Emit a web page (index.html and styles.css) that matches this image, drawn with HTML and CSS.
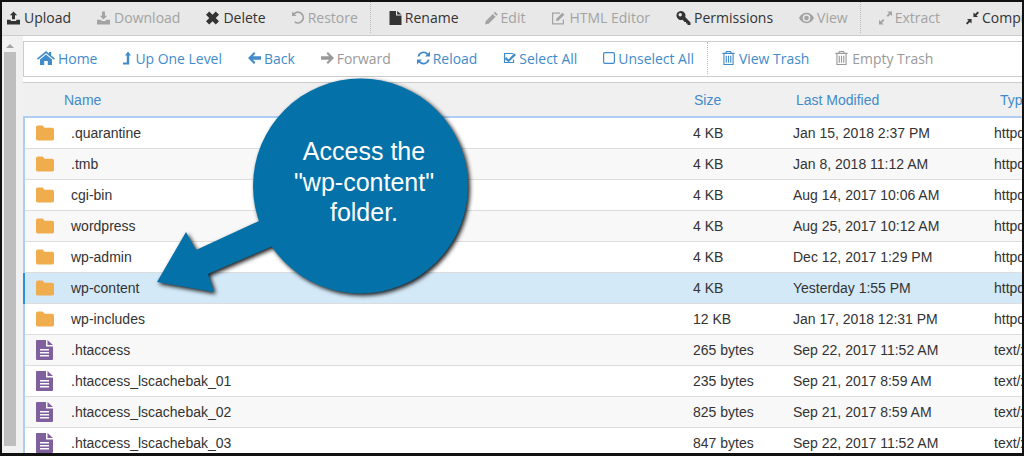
FILE: index.html
```html
<!DOCTYPE html>
<html lang="en">
<head>
<meta charset="utf-8">
<title>File Manager</title>
<link rel="stylesheet" href="styles.css">
</head>
<body>
<svg class="sprite" width="0" height="0" aria-hidden="true">
  <symbol id="i-upload" viewBox="0 0 14 14"><path d="M7 0l4 4H8.600v4.400H5.400V4H3z"/><path d="M0 9h4v1.200h6V9h4v5H0z"/></symbol>
  <symbol id="i-download" viewBox="0 0 14 14"><path d="M5.400 0h3.200v4.500H11L7 8.600 3 4.500h2.400z"/><path d="M0 9h4l1.200 1.200h3.600L10 9h4v5H0z"/></symbol>
  <symbol id="i-x" viewBox="0 0 12 12"><path d="M3 0l3 3 3-3 3 3-3 3 3 3-3 3-3-3-3 3-3-3 3-3-3-3z"/></symbol>
  <symbol id="i-restore" viewBox="0 0 13 13"><path d="M0 0l1.600 1.600A6.200 6.200 0 1 1 2.200 11l1.200-1.300A4.400 4.400 0 1 0 2.900 2.900L4.500 4.500H0z"/></symbol>
  <symbol id="i-file" viewBox="0 0 12 14"><path d="M0 0h6.500v4.500H12V14H0z"/><path d="M7.600 0L12 3.500H7.600z"/></symbol>
  <symbol id="i-pencil" viewBox="0 0 13 13"><path d="M0 13l.8-3.600 7-7 2.800 2.800-7 7z"/><path d="M8.700 1.500L10 .2l2.800 2.800-1.300 1.300z"/></symbol>
  <symbol id="i-edit" viewBox="0 0 15 13"><path d="M1.500 1H9v1.200H2.200v9.600h9.600V8h1.200v5H1V1z"/><path d="M5 9.500l.4-2.300 6-6 2 2-6 6z"/></symbol>
  <symbol id="i-key" viewBox="0 0 14 14"><path fill-rule="evenodd" d="M4.500 0a4.500 4.500 0 0 1 4.200 6.100L14 11.400V14h-3v-1.500H9.500V11H8L6.100 8.700A4.500 4.500 0 1 1 4.500 0zm-.8 2a1.700 1.700 0 1 0 0 3.400 1.700 1.700 0 0 0 0-3.400z"/></symbol>
  <symbol id="i-eye" viewBox="0 0 16 11"><path fill-rule="evenodd" d="M8 0c3.500 0 6.500 2.200 8 5.500C14.500 8.800 11.500 11 8 11S1.500 8.800 0 5.500C1.500 2.200 4.500 0 8 0zm0 1.500a4 4 0 1 0 0 8 4 4 0 0 0 0-8zM8 3a2.500 2.500 0 1 1 0 5 2.500 2.500 0 0 1 0-5z"/></symbol>
  <symbol id="i-expand" viewBox="0 0 14 14"><path d="M14 0v5l-1.800-1.800-2.600 2.600-1.400-1.400 2.600-2.600L9 0z"/><path d="M0 14V9l1.800 1.800 2.600-2.600 1.400 1.400-2.600 2.600L5 14z"/></symbol>
  <symbol id="i-compress" viewBox="0 0 14 14"><path d="M8 6V1l1.800 1.800L12.600 0 14 1.400l-2.800 2.800L13 6z"/><path d="M6 8v5l-1.800-1.800L1.400 14 0 12.600l2.800-2.800L1 8z"/></symbol>
  <symbol id="i-home" viewBox="0 0 18 14"><path d="M9 0l3 2.500V1h2.200v3.400L18 7.600l-1 1.100L9 2.200 1 8.700 0 7.600z"/><path d="M9 3.500l6 5V14h-4.200V10H7.200v4H3V8.500z"/></symbol>
  <symbol id="i-up" viewBox="0 0 8 13"><path d="M5 0l3 4H6.200v9H0v-2h3.800V4H2z"/></symbol>
  <symbol id="i-left" viewBox="0 0 13 12"><path d="M6 0l1.500 1.500L4.800 4.300H13v3.400H4.800l2.700 2.800L6 12 0 6z"/></symbol>
  <symbol id="i-right" viewBox="0 0 13 12"><path d="M7 0L5.500 1.500l2.700 2.800H0v3.400h8.200l-2.700 2.800L7 12l6-6z"/></symbol>
  <symbol id="i-reload" viewBox="0 0 13 13"><path d="M13 0v5H8l1.800-1.800A4.300 4.300 0 0 0 2.400 5H.5a6.200 6.200 0 0 1 10.600-3.100z"/><path d="M0 13V8h5l-1.800 1.800A4.300 4.300 0 0 0 10.600 8h1.900a6.200 6.200 0 0 1-10.600 3.100z"/></symbol>
  <symbol id="i-check" viewBox="0 0 14 13"><path d="M2 1h9v1.300H2.300v8.400h8.400V8H12v4H1V1z"/><path d="M3.500 5.500L6 8l6-6.500L14 3.300 6 11 1.700 7.200z"/></symbol>
  <symbol id="i-square" viewBox="0 0 12 12"><path fill-rule="evenodd" d="M2 0h8a2 2 0 0 1 2 2v8a2 2 0 0 1-2 2H2a2 2 0 0 1-2-2V2a2 2 0 0 1 2-2zm0 1.200a.8.8 0 0 0-.8.8v8c0 .4.4.8.8.8h8c.4 0 .8-.4.8-.8V2a.8.8 0 0 0-.8-.8z"/></symbol>
  <symbol id="i-trash" viewBox="0 0 13 15"><path fill-rule="evenodd" d="M4 0h5l1 2h3v1.200h-1V15H1V3.200H0V2h3zm.7 1L4.300 2h4.400l-.4-1zM2.200 3.200v10.600h8.600V3.200zM3.500 5h1.200v7.500H3.500zm2.400 0h1.200v7.500H5.900zm2.400 0h1.200v7.500H8.300z"/></symbol>
  <symbol id="i-folder" viewBox="0 0 19 16"><path d="M2 0h5l2 2.500h8a2 2 0 0 1 2 2V14a2 2 0 0 1-2 2H2a2 2 0 0 1-2-2V2a2 2 0 0 1 2-2z"/></symbol>
  <symbol id="i-doc" viewBox="0 0 17 20"><path fill-rule="evenodd" d="M1 0h9v6.500h7V19a1 1 0 0 1-1 1H1a1 1 0 0 1-1-1V1a1 1 0 0 1 1-1zm3 9v1.500h9V9zm0 3v1.500h9V12zm0 3v1.500h9V15z"/><path d="M11.500 0L17 5h-5.500z"/></symbol>
</svg>

<div class="frame">
  <nav class="tools">
    <a class="tool"><svg class="ic w13"><use href="#i-upload"/></svg>Upload</a>
    <a class="tool off"><svg class="ic w13"><use href="#i-download"/></svg>Download</a>
    <a class="tool"><svg class="ic w13"><use href="#i-x"/></svg>Delete</a>
    <a class="tool off"><svg class="ic w13 tight"><use href="#i-restore"/></svg>Restore</a>
    <span class="sep"></span>
    <a class="tool"><svg class="ic w13 tight"><use href="#i-file"/></svg>Rename</a>
    <a class="tool off"><svg class="ic w13 tight"><use href="#i-pencil"/></svg>Edit</a>
    <a class="tool off"><svg class="ic w15 tight"><use href="#i-edit"/></svg>HTML Editor</a>
    <a class="tool"><svg class="ic w15 tight"><use href="#i-key"/></svg>Permissions</a>
    <a class="tool off"><svg class="ic w15 tight"><use href="#i-eye"/></svg>View</a>
    <span class="sep"></span>
    <a class="tool off"><svg class="ic w13 tight"><use href="#i-expand"/></svg>Extract</a>
    <a class="tool"><svg class="ic w13 tight"><use href="#i-compress"/></svg>Compress</a>
  </nav>

  <div class="body">
    <div class="scroll"><span class="arrow"></span><span class="thumb"></span></div>
    <main class="main">
      <nav class="nav">
        <a class="link"><svg class="ic w18"><use href="#i-home"/></svg>Home</a>
        <a class="link"><svg class="ic w8 wide"><use href="#i-up"/></svg>Up One Level</a>
        <a class="link"><svg class="ic w13"><use href="#i-left"/></svg>Back</a>
        <a class="link off"><svg class="ic w13"><use href="#i-right"/></svg>Forward</a>
        <a class="link"><svg class="ic w13"><use href="#i-reload"/></svg>Reload</a>
        <a class="link"><svg class="ic w13"><use href="#i-check"/></svg>Select All</a>
        <a class="link"><svg class="ic w12"><use href="#i-square"/></svg>Unselect All</a>
        <span class="sep"></span>
        <a class="link"><svg class="ic w13 wide"><use href="#i-trash"/></svg>View Trash</a>
        <a class="link off"><svg class="ic w13 wide"><use href="#i-trash"/></svg>Empty Trash</a>
      </nav>

      <div class="table">
        <div class="head">
          <span class="h-name">Name</span>
          <span class="h-size">Size</span>
          <span class="h-mod">Last Modified</span>
          <span class="h-type">Type</span>
        </div>
        <div class="rows">
          <div class="row"><svg class="fi folder"><use href="#i-folder"/></svg><span class="name">.quarantine</span><span class="size">4 KB</span><span class="mod">Jan 15, 2018 2:37 PM</span><span class="type">httpd/unix-directory</span></div>
          <div class="row alt"><svg class="fi folder"><use href="#i-folder"/></svg><span class="name">.tmb</span><span class="size">4 KB</span><span class="mod">Jan 8, 2018 11:12 AM</span><span class="type">httpd/unix-directory</span></div>
          <div class="row"><svg class="fi folder"><use href="#i-folder"/></svg><span class="name">cgi-bin</span><span class="size">4 KB</span><span class="mod">Aug 14, 2017 10:06 AM</span><span class="type">httpd/unix-directory</span></div>
          <div class="row alt"><svg class="fi folder"><use href="#i-folder"/></svg><span class="name">wordpress</span><span class="size">4 KB</span><span class="mod">Aug 25, 2017 10:12 AM</span><span class="type">httpd/unix-directory</span></div>
          <div class="row"><svg class="fi folder"><use href="#i-folder"/></svg><span class="name">wp-admin</span><span class="size">4 KB</span><span class="mod">Dec 12, 2017 1:29 PM</span><span class="type">httpd/unix-directory</span></div>
          <div class="row selected"><svg class="fi folder"><use href="#i-folder"/></svg><span class="name">wp-content</span><span class="size">4 KB</span><span class="mod">Yesterday 1:55 PM</span><span class="type">httpd/unix-directory</span></div>
          <div class="row"><svg class="fi folder"><use href="#i-folder"/></svg><span class="name">wp-includes</span><span class="size">12 KB</span><span class="mod">Jan 17, 2018 12:31 PM</span><span class="type">httpd/unix-directory</span></div>
          <div class="row alt"><svg class="fi doc"><use href="#i-doc"/></svg><span class="name">.htaccess</span><span class="size">265 bytes</span><span class="mod">Sep 22, 2017 11:52 AM</span><span class="type">text/x-generic</span></div>
          <div class="row"><svg class="fi doc"><use href="#i-doc"/></svg><span class="name">.htaccess_lscachebak_01</span><span class="size">235 bytes</span><span class="mod">Sep 21, 2017 8:59 AM</span><span class="type">text/x-generic</span></div>
          <div class="row alt"><svg class="fi doc"><use href="#i-doc"/></svg><span class="name">.htaccess_lscachebak_02</span><span class="size">825 bytes</span><span class="mod">Sep 21, 2017 8:59 AM</span><span class="type">text/x-generic</span></div>
          <div class="row"><svg class="fi doc"><use href="#i-doc"/></svg><span class="name">.htaccess_lscachebak_03</span><span class="size">847 bytes</span><span class="mod">Sep 22, 2017 11:52 AM</span><span class="type">text/x-generic</span></div>
        </div>
      </div>
    </main>
  </div>

  <aside class="callout">
    <svg class="bubble" width="340" height="240" viewBox="0 0 340 240">
      <g class="bubble-shape">
        <circle cx="218.500" cy="116" r="107.500"/>
        <path d="M15 212L44 162 54 180 130 145 145 170 66 204 72 222z"/>
      </g>
    </svg>
    <p class="callout-text">Access the<br>"wp-content"<br>folder.</p>
  </aside>
</div>
</body>
</html>
```
FILE: styles.css
```css
* { box-sizing: border-box; }
html, body { margin: 0; padding: 0; }
body { width: 1024px; height: 456px; overflow: hidden; background: #000; }
.sprite { position: absolute; }

.frame {
  position: relative;
  width: 1024px;
  height: 456px;
  border: solid #111;
  border-width: 2px 2px 3px 2px;
  background: #fff;
  overflow: hidden;
  display: flex;
  flex-direction: column;
  font-family: "Open Sans", sans-serif;
  font-size: 14px;
}

.ic { height: 14px; fill: currentColor; flex: none; margin-right: 4px; }
.w8 { width: 8px; }
.w12 { width: 12px; }
.w13 { width: 13px; }
.w15 { width: 15px; }
.w18 { width: 18px; }
.tools .ic.tight { margin-right: 3px; }

.tools {
  flex: none;
  height: 34px;
  display: flex;
  align-items: center;
  gap: 26px;
  padding: 0 0 2px 5px;
  background: #e8e8e8;
  border-bottom: 1px solid #ccc;
  white-space: nowrap;
  color: #333;
}
.tool, .link { display: flex; align-items: center; flex: none; }
.tool.off { color: #a3a3a3; }
.tools .sep { flex: none; align-self: stretch; width: 0; border-left: 1px dotted #bbb; margin: 0 -8px 0 -14px; }

.body { flex: 1; display: flex; min-height: 0; }
.scroll {
  flex: none;
  width: 21px;
  padding: 8px 0 0 2px;
  background: #f1f1f1;
  display: flex;
  flex-direction: column;
  align-items: flex-start;
}
.arrow {
  width: 0;
  height: 0;
  margin-left: 2px;
  border: solid transparent;
  border-width: 0 4px 4px;
  border-bottom-color: #a3a3a3;
}
.thumb { width: 12px; height: 394px; margin-top: 4px; background: #bebebe; }

.main { flex: 1; min-width: 0; background: #fff; padding-top: 5px; }
.nav {
  height: 36px;
  display: flex;
  align-items: center;
  gap: 26px;
  padding: 0 0 2px 13px;
  border: 1px solid #ccc;
  border-right: 0;
  white-space: nowrap;
  color: #428bca;
  font-size: 13.950px;
}
.nav .ic { margin-right: 3px; }
.nav .ic.wide { margin-right: 4px; }
.link.off { color: #999; }
.nav .sep { flex: none; align-self: stretch; width: 0; border-left: 1px dotted #bbb; margin: 0 -12px 0 -13px; }

.table {
  margin-top: 5px;
  font-family: "Liberation Sans", Arial, sans-serif;
  font-size: 14px;
  color: #333;
}
.head {
  height: 36px;
  display: flex;
  align-items: center;
  background: #f0f0f0;
  border-top: 1px solid #ccc;
  border-bottom: 2px solid #afcdf5;
  color: #428bca;
  white-space: nowrap;
}
.h-name { width: 671px; padding-left: 41px; flex: none; }
.h-size { width: 102px; flex: none; }
.h-mod { width: 204px; flex: none; }
.rows { border-left: 2px solid #afcdf5; }
.row {
  height: 31px;
  display: flex;
  align-items: center;
  background: #fff;
  border-bottom: 1px solid #ddd;
  white-space: nowrap;
}
.row.alt { background: #f8f8f8; }
.row.selected { background: #d4e9f8; box-shadow: -2px 0 0 #2a8fdc; }
.fi { flex: none; }
.fi.folder { width: 18px; height: 16px; margin-left: 11px; margin-right: 17px; fill: #f0ad4e; }
.fi.doc { width: 17px; height: 20px; margin-left: 11px; margin-right: 18px; fill: #7f5f9c; }
.name { width: 622px; flex: none; }
.size { width: 100px; flex: none; }
.mod { width: 201px; flex: none; }

.callout { position: absolute; left: 140px; top: 68px; width: 340px; height: 240px; }
.bubble { display: block; overflow: visible; }
.bubble-shape { fill: #0472a9; filter: drop-shadow(2px 2px 2px rgba(0,0,0,.9)); }
.callout-text {
  position: absolute;
  left: 122px;
  top: 66px;
  width: 200px;
  margin: 0;
  text-align: center;
  color: #fff;
  font-family: "Liberation Sans", Arial, sans-serif;
  font-size: 25px;
  line-height: 30.500px;
}
```
